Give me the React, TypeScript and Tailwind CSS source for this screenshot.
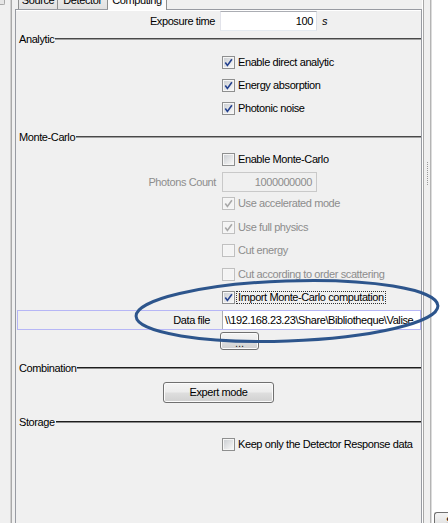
const BTN =
  "flex items-center justify-center rounded-[3px] border border-[#707070] bg-[linear-gradient(#f4f4f4,#ececec_48%,#dedede_52%,#d0d0d0)] shadow-[inset_0_0_0_1px_#fbfbfb]";

function Check({ on = false, off = false }: { on?: boolean; off?: boolean }) {
  return (
    <span
      className={`relative flex h-[13px] w-[13px] shrink-0 items-center justify-center border bg-[#f6f6f6] ${
        off ? "border-[#c0c0c0]" : "border-[#8e8f8f]"
      }`}
    >
      <span
        className={`h-[9px] w-[9px] ${
          off ? "bg-[#f4f4f4]" : "bg-gradient-to-br from-[#cdd0d4] to-[#f7f7f7]"
        }`}
      />
      {on && (
        <svg className="absolute left-0 top-0" width="11" height="11" viewBox="0 0 11 11">
          <path
            d="M2.3 5.6 L4.4 8.4 L8.9 2.2"
            fill="none"
            stroke={off ? "#a8a8a8" : "#23418f"}
            strokeWidth="1.6"
          />
        </svg>
      )}
    </span>
  );
}

function CheckRow({
  label,
  on,
  off,
  h,
  focus,
}: {
  label: string;
  on?: boolean;
  off?: boolean;
  h: string;
  focus?: boolean;
}) {
  return (
    <div className={`flex items-center pl-[206px] ${h}`}>
      <Check on={on} off={off} />
      {focus ? (
        <span className="ml-[2px] px-px leading-[11px] outline-1 outline-dotted outline-[#303030]">{label}</span>
      ) : (
        <span className={`ml-[3px] ${off ? "text-[#8d8d8d]" : ""}`}>{label}</span>
      )}
    </div>
  );
}

function Title({ text, thick, className }: { text: string; thick?: boolean; className: string }) {
  return (
    <div className={`flex h-[14px] items-center pl-[3px] ${className}`}>
      <span>{text}</span>
      <div
        className={
          thick
            ? "ml-px h-[2px] flex-1 border-t border-[#484848] bg-[#a0a0a0]"
            : "ml-px h-[2px] flex-1 border-t border-[#1e1e1e] bg-[#8a8a8a]"
        }
      />
    </div>
  );
}

export default function App() {
  return (
    <div className="relative flex h-[523px] w-[448px] overflow-hidden bg-[#f0f0f0] font-['Liberation_Sans',Arial,sans-serif] text-[11px] leading-[13px] tracking-[-0.4px] text-black">
      {/* left neighbour strip */}
      <div className="flex w-[15px] shrink-0">
        <div className="w-[10px]">
          <div className="h-[5px] w-[5px] rounded-br-[2px] border-b border-r border-[#a8a8a8] bg-[#e6e6e6]" />
        </div>
        <div className="w-px bg-[#d0d0d0]" />
        <div className="w-px bg-[#a9a9a9]" />
        <div className="w-[3px]" />
      </div>

      {/* tabbed pane */}
      <div className="flex w-[407px] shrink-0 flex-col">
        <div className="relative z-10 flex h-[9px] items-end pl-[3px]">
          <div className="flex h-[21px] w-[40px] shrink-0 items-center justify-center border border-b-0 border-[#8e8f8f] bg-gradient-to-b from-[#f3f3f3] to-[#e1e1e1] pt-[3px]">
            Source
          </div>
          <div className="flex h-[21px] w-[50px] shrink-0 items-center justify-center border border-b-0 border-l-0 border-[#8e8f8f] bg-gradient-to-b from-[#f3f3f3] to-[#e1e1e1] pt-[3px]">
            Detector
          </div>
          <div className="-mb-px flex h-[23px] w-[59px] shrink-0 items-center justify-center border border-b-0 border-l-0 border-[#8e8f8f] bg-[#fbfbfb] pt-[2px]">
            Computing
          </div>
        </div>

        <div className="flex flex-1 flex-col border-x border-t border-[#989ba2]">
          <div className="h-px bg-white" />

          <div className="flex h-[20px] items-center">
            <span className="w-[199px] text-right">Exposure time</span>
            <div className="ml-[5px] flex h-[20px] w-[97px] items-center justify-end border border-[#abadb3] border-b-[#e3e9ef] border-l-[#e2e3ea] border-r-[#dbdfe6] bg-white pr-[3px]">
              100
            </div>
            <span className="ml-[5px] italic">s</span>
          </div>

          <Title text="Analytic" thick className="mt-[1px]" />
          <CheckRow h="mt-[5px] h-[23px]" on label="Enable direct analytic" />
          <CheckRow h="h-[23px]" on label="Energy absorption" />
          <CheckRow h="h-[23px]" on label="Photonic noise" />

          <Title text="Monte-Carlo" thick className="mt-[10px]" />
          <CheckRow h="mt-[4px] h-[23px]" label="Enable Monte-Carlo" />
          <div className="mt-[1px] flex h-[20px] items-center text-[#8d8d8d]">
            <span className="w-[200px] text-right">Photons Count</span>
            <div className="ml-[6px] flex h-[20px] w-[95px] items-center justify-end border border-[#c9c9c9] bg-[#f0f0f0] pr-[4px]">
              1000000000
            </div>
          </div>
          <CheckRow h="h-[23px]" on off label="Use accelerated mode" />
          <CheckRow h="h-[24px]" on off label="Use full physics" />
          <CheckRow h="h-[23px]" off label="Cut energy" />
          <CheckRow h="h-[24px]" off label="Cut according to order scattering" />
          <CheckRow h="h-[23px]" on focus label="Import Monte-Carlo computation" />

          <div className="ml-px mt-[1px] flex h-[20px] items-center border border-[#b6b6f6]">
            <span className="w-[192px] text-right">Data file</span>
            <div className="ml-[12px] flex h-full flex-1 items-center overflow-hidden whitespace-nowrap border-l border-[#abadb3] bg-white pl-[2px]">
              {"\\\\192.168.23.23\\Share\\Bibliotheque\\Valise"}
            </div>
          </div>
          <div className={`ml-[204px] mt-[2px] h-[18px] w-[39px] pt-[4px] text-[#202020] ${BTN}`}>
            <span className="tracking-normal">...</span>
          </div>

          <Title text="Combination" className="mt-[11px]" />
          <div className={`mx-auto mt-[7px] h-[21px] w-[111px] ${BTN}`}>Expert mode</div>

          <Title text="Storage" className="mt-[12px]" />
          <CheckRow h="mt-[4px] h-[23px]" label="Keep only the Detector Response data" />
        </div>
      </div>

      {/* splitter */}
      <div className="flex w-[10px] shrink-0">
        <div className="w-px bg-white" />
        <div className="w-px bg-[#a8a8a8]" />
        <div className="flex w-[6px] justify-center pt-[162px]">
          <div className="h-[23px] w-px border-l border-dotted border-[#9a9a9a]" />
        </div>
        <div className="w-px bg-[#b4b4b4]" />
        <div className="w-px bg-[#dcdcdc]" />
      </div>

      <div className="flex flex-1 flex-col justify-end bg-white">
        <div className="ml-[2px] h-[11px] overflow-hidden rounded-tl-[3px] border-l border-t border-[#707070] bg-gradient-to-b from-[#f4f4f4] to-[#e4e4e4] pl-[11px] pt-[3px] leading-none">
          S
        </div>
      </div>

      <svg className="pointer-events-none absolute left-0 top-0" width="448" height="523">
        <ellipse
          cx="287"
          cy="311"
          rx="151"
          ry="30"
          transform="rotate(-2 287 311)"
          fill="none"
          stroke="#2d558c"
          strokeWidth="3"
        />
      </svg>
    </div>
  );
}
